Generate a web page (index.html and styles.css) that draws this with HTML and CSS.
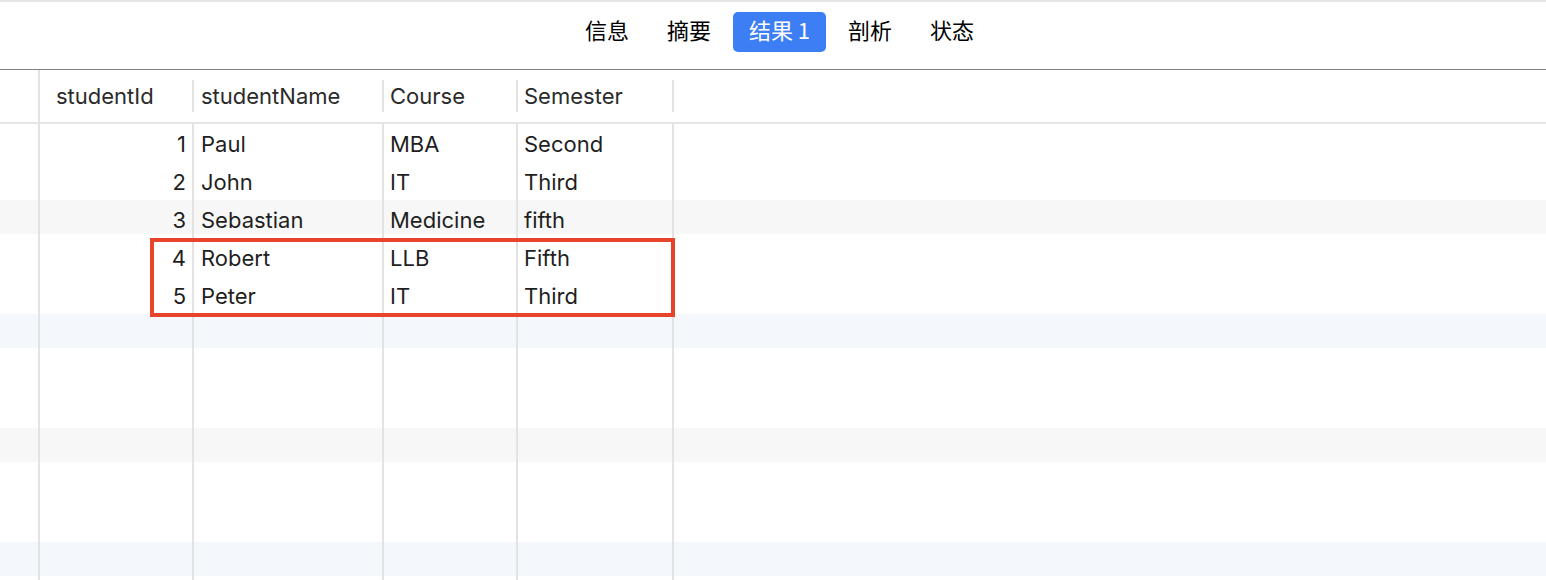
FILE: index.html
```html
<!DOCTYPE html>
<html lang="zh">
<head>
<meta charset="utf-8">
<title>结果</title>
<link rel="stylesheet" href="styles.css">
</head>
<body>
<div class="topstrip"></div>
<div class="tabbar">
  <div class="tabs">
    <span class="tab">信息</span>
    <span class="tab">摘要</span>
    <span class="tab active">结果 1</span>
    <span class="tab">剖析</span>
    <span class="tab">状态</span>
  </div>
</div>
<div class="grid">
  <div class="row head">
    <div class="cell c0"></div>
    <div class="cell c1">studentId</div>
    <div class="cell c2">studentName</div>
    <div class="cell c3">Course</div>
    <div class="cell c4">Semester</div>
    <div class="cell c5"></div>
  </div>
  <div class="row"><div class="cell c0"></div><div class="cell c1 num">1</div><div class="cell c2">Paul</div><div class="cell c3">MBA</div><div class="cell c4">Second</div><div class="cell c5"></div></div>
  <div class="row"><div class="cell c0"></div><div class="cell c1 num">2</div><div class="cell c2">John</div><div class="cell c3">IT</div><div class="cell c4">Third</div><div class="cell c5"></div></div>
  <div class="row gray"><div class="cell c0"></div><div class="cell c1 num">3</div><div class="cell c2">Sebastian</div><div class="cell c3">Medicine</div><div class="cell c4">fifth</div><div class="cell c5"></div></div>
  <div class="row"><div class="cell c0"></div><div class="cell c1 num">4</div><div class="cell c2">Robert</div><div class="cell c3">LLB</div><div class="cell c4">Fifth</div><div class="cell c5"></div></div>
  <div class="row"><div class="cell c0"></div><div class="cell c1 num">5</div><div class="cell c2">Peter</div><div class="cell c3">IT</div><div class="cell c4">Third</div><div class="cell c5"></div></div>
  <div class="row blue"><div class="cell c0"></div><div class="cell c1"></div><div class="cell c2"></div><div class="cell c3"></div><div class="cell c4"></div><div class="cell c5"></div></div>
  <div class="row"><div class="cell c0"></div><div class="cell c1"></div><div class="cell c2"></div><div class="cell c3"></div><div class="cell c4"></div><div class="cell c5"></div></div>
  <div class="row"><div class="cell c0"></div><div class="cell c1"></div><div class="cell c2"></div><div class="cell c3"></div><div class="cell c4"></div><div class="cell c5"></div></div>
  <div class="row gray"><div class="cell c0"></div><div class="cell c1"></div><div class="cell c2"></div><div class="cell c3"></div><div class="cell c4"></div><div class="cell c5"></div></div>
  <div class="row"><div class="cell c0"></div><div class="cell c1"></div><div class="cell c2"></div><div class="cell c3"></div><div class="cell c4"></div><div class="cell c5"></div></div>
  <div class="row"><div class="cell c0"></div><div class="cell c1"></div><div class="cell c2"></div><div class="cell c3"></div><div class="cell c4"></div><div class="cell c5"></div></div>
  <div class="row blue"><div class="cell c0"></div><div class="cell c1"></div><div class="cell c2"></div><div class="cell c3"></div><div class="cell c4"></div><div class="cell c5"></div></div>
  <div class="highlight"></div>
</div>
</body>
</html>
```

FILE: styles.css
```css
html, body {
  margin: 0;
  padding: 0;
  background: #fff;
  overflow: hidden;
}
body {
  font-family: "Inter", "Noto Sans CJK SC", sans-serif;
  color: #1f1f1f;
}
.topstrip {
  height: 2px;
  background: #e6e6e6;
}
.tabbar {
  box-sizing: border-box;
  height: 68px;
  border-bottom: 1px solid #808080;
  display: flex;
  align-items: flex-start;
  justify-content: center;
  padding-left: 13px;
  padding-top: 10px;
}
.tabs {
  display: flex;
  gap: 6px;
}
.tab {
  font-family: "Noto Sans CJK SC", "Inter", sans-serif;
  font-size: 22px;
  font-weight: 400;
  line-height: 34px;
  height: 40px;
  box-sizing: border-box;
  padding: 0 16px 6px;
  color: #000;
  border-radius: 5px;
}
.tab.active {
  background: #3d7ef5;
  color: #fff;
}
.grid {
  position: relative;
}
.row {
  display: flex;
  height: 38px;
  font-size: 22px;
}
.row.head {
  height: 52px;
  border-bottom: 2px solid #e5e5e5;
  color: #2b2b2b;
}
.row.gray {
  background: linear-gradient(to bottom, #f7f7f7 34px, transparent 34px);
}
.row.blue {
  background: linear-gradient(to bottom, #f4f7fc 34px, transparent 34px);
}
.cell {
  box-sizing: border-box;
  border-right: 2px solid #e3e3e3;
  display: flex;
  align-items: center;
  padding: 2px 6px 0;
  white-space: nowrap;
}
.row.head .cell {
  padding-top: 0;
}
.c0 { width: 40px; }
.c1 { width: 154px; }
.c2 { width: 190px; padding-left: 7px; }
.c3 { width: 134px; }
.c4 { width: 156px; }
.c5 { flex: 1; border-right: none; }
.cell.num {
  justify-content: flex-end;
  padding-right: 6px;
}
.row.head .cell {
  border-right: none;
  position: relative;
}
.row.head .c0 {
  border-right: 2px solid #e3e3e3;
}
.row.head .c1 { padding-left: 16px; }
.row.head .c1::after,
.row.head .c2::after,
.row.head .c3::after,
.row.head .c4::after {
  content: "";
  position: absolute;
  right: 0;
  top: 10px;
  height: 32px;
  width: 2px;
  background: #e3e3e3;
}
.highlight {
  position: absolute;
  left: 150px;
  top: 168px;
  width: 525px;
  height: 79px;
  box-sizing: border-box;
  border: 4px solid #e8432b;
  pointer-events: none;
}
```
